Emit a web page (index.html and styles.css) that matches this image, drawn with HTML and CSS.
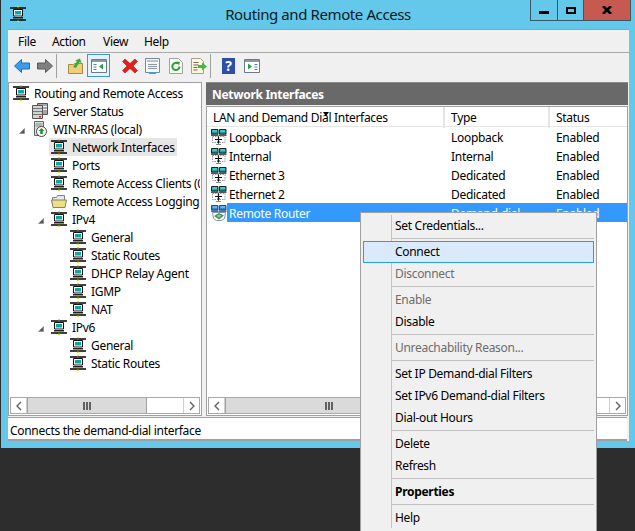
FILE: index.html
```html
<!DOCTYPE html>
<html lang="en">
<head>
    <meta charset="UTF-8">
    <title>Routing and Remote Access</title>
    <link rel="stylesheet" href="styles.css">
</head>
<body>
    <!-- shared icons -->
    <svg class="defs" aria-hidden="true">
        <symbol id="node" viewBox="0 0 16 16">
            <path d="M0 1.200h16v1.600H0zM0 13.200h16v1.600H0z" fill="#000"/>
            <path d="M7 0h2v1.200H7zM7 14.800h2V16H7zM7.500 2.800h1v.7h-1zM7.500 12.500h1v.7h-1z" fill="#e8e010"/>
            <path d="M3.500 3.500h9v6.500h-9z" fill="#fff" stroke="#111"/>
            <path d="M5 5h6v3.500H5z" fill="#0fa6a0"/>
            <path d="M3 11h10v1.500H3z" fill="#222"/>
            <path d="M5 10h6v1H5z" fill="#999"/>
        </symbol>
        <symbol id="lan" viewBox="0 0 16 16">
            <path d="M.5.5h6.500v4.500h-6.500zM8.500.5h6.500v4.500h-6.500z" fill="#0fa8b0" stroke="#111" stroke-width=".9"/>
            <path d="M1.500 1.500h4.500v1h-4.500zM9.500 1.500h4.500v1h-4.500z" fill="#7fe0e0"/>
            <path d="M0 5.600h7.500v1.200h-7.500zM8 5.600h7.500v1.200H8z" fill="#222"/>
            <path d="M1.500 7.500h12.500v6h-12.500z" fill="#fff" stroke="#888" stroke-width=".9" stroke-dasharray="1.500 1"/>
            <path d="M7.500 7.500v7M4 10.500h7" stroke="#111" stroke-width="1.200"/>
            <path d="M6 12.500h3l-1.500 2z" fill="#111"/>
            <path d="M5 15h5v1H5z" fill="#888"/>
        </symbol>
        <symbol id="demand" viewBox="0 0 16 16">
            <path d="M.5.5h6.500v4.500h-6.500zM8.500.5h6.500v4.500h-6.500z" fill="#2a8ed8" stroke="#1d3f6e" stroke-width=".9"/>
            <path d="M1.500 1.500h4.500v1h-4.500zM9.500 1.500h4.500v1h-4.500z" fill="#a8d8f8"/>
            <path d="M0 5.600h7.500v1.200h-7.500zM8 5.600h7.500v1.200H8z" fill="#1d3f6e"/>
            <path d="M1.500 7.500h13l-1 6-3 2h-5l-3-2z" fill="#fff" stroke="#5f8fc0" stroke-width=".9"/>
            <path d="M3 11l5-3 5 2.500-5 4z" fill="#4b8f4a"/>
            <path d="M5.500 11l2.500-1.500 2.500 1-2.500 2z" fill="#9ac899"/>
        </symbol>
        <symbol id="left" viewBox="0 0 8 10"><path d="M6 1L2 5l4 4" fill="none" stroke="#606060" stroke-width="1.400"/></symbol>
        <symbol id="right" viewBox="0 0 8 10"><path d="M2 1l4 4-4 4" fill="none" stroke="#606060" stroke-width="1.400"/></symbol>
        <symbol id="grip" viewBox="0 0 8 8"><path d="M0 0h2v8H0zM3 0h2v8H3zM6 0h2v8H6z" fill="#606060"/></symbol>
        <symbol id="exp" viewBox="0 0 6 6"><path d="M5.500.5v5h-5z" fill="#595959" stroke="#8a8a8a" stroke-width=".7"/></symbol>
    </svg>

    <div class="window">
        <div class="titlebar">
            <svg class="title-icon"><use href="#node"/></svg>
            <div class="title">Routing and Remote Access</div>
            <div class="win-buttons">
                <div class="win-btn btn-min"><svg width="10" height="3"><path d="M0 0h10v3H0z" fill="#000"/></svg></div>
                <div class="win-btn btn-max"><svg width="10" height="7"><path d="M1 1h8v5H1z" fill="none" stroke="#000" stroke-width="2"/></svg></div>
                <div class="win-btn btn-close"><svg width="10" height="8"><path d="M1 0l8 8M9 0l-8 8" fill="none" stroke="#000" stroke-width="2.600"/></svg></div>
            </div>
        </div>

        <div class="client">
            <div class="menubar">
                <span class="menu-file">File</span>
                <span class="menu-action">Action</span>
                <span class="menu-view">View</span>
                <span>Help</span>
            </div>

            <div class="toolbar">
                <div class="tool">
                    <svg width="16" height="14" viewBox="0 0 16 14"><path d="M7.500.5L.5 7l7 6.500V10h8V4h-8z" fill="#3f9be6" stroke="#1c6fb8"/></svg>
                </div>
                <div class="tool">
                    <svg width="16" height="14" viewBox="0 0 16 14"><path d="M8.500.5L15.500 7l-7 6.500V10h-8V4h8z" fill="#808080" stroke="#5a5a5a"/></svg>
                </div>
                <div class="tool-sep"></div>
                <div class="tool">
                    <svg width="15" height="16" viewBox="0 0 15 16"><path d="M.5 6.500h5l1-1h8v10H.5z" fill="#f0cf7c" stroke="#a98a3e"/><path d="M5 9l4-6-2-.5 5-2 1.500 4.500-2-.8L8 10z" fill="#3eaa3a"/></svg>
                </div>
                <div class="tool tool-on">
                    <svg width="16" height="14" viewBox="0 0 16 14"><path d="M.5.5h15v13H.5z" fill="#fff" stroke="#6b7a88"/><path d="M1 1h14v2H1z" fill="#8a98a8"/><path d="M2.500 5h3v1h-3zM2.500 7.500h3v1h-3zM2.500 10h3v1h-3z" fill="#4a84b8"/><path d="M12 4.500v6l-4-3z" fill="#27a047"/></svg>
                </div>
                <div class="tool-gap"></div>
                <div class="tool">
                    <svg width="16" height="16" viewBox="0 0 16 16"><path d="M3 1l5 4.500L13 1l2.500 2.500L11 8l4.500 4.500L13 15l-5-4.500L3 15 .5 12.500 5 8 .5 3.500z" fill="#e0201e" stroke="#a81616" stroke-width=".6"/></svg>
                </div>
                <div class="tool">
                    <svg width="15" height="16" viewBox="0 0 15 16"><path d="M.5.5h14v14H.5z" fill="#f4f6f8" stroke="#7d8a96"/><path d="M2 2h11v2H2z" fill="#b8c2cc"/><path d="M3 6h9v1H3zM3 8h9v1H3zM3 10h9v1H3z" fill="#8a98a6"/><path d="M4 14h7v2H4z" fill="#3a9ee0"/></svg>
                </div>
                <div class="tool">
                    <svg width="14" height="16" viewBox="0 0 14 16"><path d="M.5.5h9l4 4v11H.5z" fill="#fbfbf4" stroke="#a0a0a0"/><path d="M10.500 8.500a3.600 3.600 0 1 1-1.500-3" fill="none" stroke="#2ba03a" stroke-width="2"/><path d="M7.500 3.500l3.500.5-1 3.500z" fill="#2ba03a"/></svg>
                </div>
                <div class="tool">
                    <svg width="16" height="16" viewBox="0 0 16 16"><path d="M.5.5h9l3 3v12H.5z" fill="#fdf6d8" stroke="#a8a088"/><path d="M2.500 4h5v1h-5zM2.500 6.500h5v1h-5zM2.500 9h4v1h-4zM2.500 11.500h4v1h-4z" fill="#6a6a6a"/><path d="M7 7h4V4.500L16 8.500l-5 4V10H7z" fill="#48b548"/></svg>
                </div>
                <div class="tool-sep tool-sep-narrow"></div>
                <div class="tool">
                    <span class="help-icon">?</span>
                </div>
                <div class="tool">
                    <svg width="16" height="14" viewBox="0 0 16 14"><path d="M.5.5h15v13H.5z" fill="#fff" stroke="#6b7a88"/><path d="M1 1h14v2H1z" fill="#8a98a8"/><path d="M10.500 5h3v1h-3zM10.500 7.500h3v1h-3zM10.500 10h3v1h-3z" fill="#4a84b8"/><path d="M4 4.500v6l4-3z" fill="#27a047"/></svg>
                </div>
            </div>

            <div class="panes">
                <div class="pane tree-pane">
                    <div class="tree">
                        <div class="tree-row"><span class="node"><svg class="icon"><use href="#node"/></svg>Routing and Remote Access</span></div>
                        <div class="tree-row"><span class="exp"></span><span class="node">
                            <svg class="icon" viewBox="0 0 16 16"><path d="M5.500.5h10v11h-10z" fill="#a8a8a8" stroke="#555"/><path d="M6 3.500h9M6 6.500h9" stroke="#e8e8e8"/><path d="M.5 2.500h10v13H.5z" fill="#d4d4d4" stroke="#555"/><path d="M1 5.500h9M1 8.500h9M1 11.500h9" stroke="#777"/><path d="M7 13h2v1.500H7z" fill="#d02020"/></svg>Server Status</span></div>
                        <div class="tree-row"><span class="exp"><svg class="exp-mark"><use href="#exp"/></svg></span><span class="node">
                            <svg class="icon" viewBox="0 0 16 16"><path d="M2.500.5h9v14h-9z" fill="#dcdcdc" stroke="#666"/><path d="M3.500 3h7M3.500 5h7" stroke="#888"/><circle cx="9.500" cy="10.500" r="5" fill="#fff" stroke="#444"/><path d="M9.500 7l3 3h-1.700v3H8.200v-3H6.500z" fill="#1a9a30"/></svg>WIN-RRAS (local)</span></div>
                        <div class="tree-row lv1"><span class="exp"></span><span class="node node-sel"><svg class="icon"><use href="#node"/></svg>Network Interfaces</span></div>
                        <div class="tree-row lv1"><span class="exp"></span><span class="node"><svg class="icon"><use href="#node"/></svg>Ports</span></div>
                        <div class="tree-row lv1"><span class="exp"></span><span class="node"><svg class="icon"><use href="#node"/></svg>Remote Access Clients (0)</span></div>
                        <div class="tree-row lv1"><span class="exp"></span><span class="node">
                            <svg class="icon" viewBox="0 0 16 16"><path d="M1.500 4.500h4l1-2h7v10h-12z" fill="#e8e8e8" stroke="#808080"/><path d="M.5 7h15L14 14.500H2z" fill="#eedf80" stroke="#808080"/></svg>Remote Access Logging &amp; Policies</span></div>
                        <div class="tree-row lv1"><span class="exp"><svg class="exp-mark"><use href="#exp"/></svg></span><span class="node"><svg class="icon"><use href="#node"/></svg>IPv4</span></div>
                        <div class="tree-row lv2"><span class="exp"></span><span class="node"><svg class="icon"><use href="#node"/></svg>General</span></div>
                        <div class="tree-row lv2"><span class="exp"></span><span class="node"><svg class="icon"><use href="#node"/></svg>Static Routes</span></div>
                        <div class="tree-row lv2"><span class="exp"></span><span class="node"><svg class="icon"><use href="#node"/></svg>DHCP Relay Agent</span></div>
                        <div class="tree-row lv2"><span class="exp"></span><span class="node"><svg class="icon"><use href="#node"/></svg>IGMP</span></div>
                        <div class="tree-row lv2"><span class="exp"></span><span class="node"><svg class="icon"><use href="#node"/></svg>NAT</span></div>
                        <div class="tree-row lv1"><span class="exp"><svg class="exp-mark"><use href="#exp"/></svg></span><span class="node"><svg class="icon"><use href="#node"/></svg>IPv6</span></div>
                        <div class="tree-row lv2"><span class="exp"></span><span class="node"><svg class="icon"><use href="#node"/></svg>General</span></div>
                        <div class="tree-row lv2"><span class="exp"></span><span class="node"><svg class="icon"><use href="#node"/></svg>Static Routes</span></div>
                    </div>
                    <div class="hscroll">
                        <div class="sb-btn"><svg class="sb-arrow"><use href="#left"/></svg></div>
                        <div class="sb-thumb thumb-tree"><svg class="sb-grip"><use href="#grip"/></svg></div>
                        <div class="sb-track"></div>
                        <div class="sb-btn sb-btn-end"><svg class="sb-arrow"><use href="#right"/></svg></div>
                    </div>
                </div>

                <div class="result-pane">
                    <div class="pane-head">Network Interfaces</div>
                    <div class="pane list-pane">
                        <div class="list-head">
                            <div class="col-head">LAN and Demand Dial Interfaces<span class="sort-mark"></span></div>
                            <div class="col-head">Type</div>
                            <div class="col-head col-last">Status</div>
                        </div>
                        <div class="list">
                            <div class="list-row">
                                <svg class="icon row-icon"><use href="#lan"/></svg>
                                <div class="row-cols"><span>Loopback</span><span>Loopback</span><span>Enabled</span></div>
                            </div>
                            <div class="list-row">
                                <svg class="icon row-icon"><use href="#lan"/></svg>
                                <div class="row-cols"><span>Internal</span><span>Internal</span><span>Enabled</span></div>
                            </div>
                            <div class="list-row">
                                <svg class="icon row-icon"><use href="#lan"/></svg>
                                <div class="row-cols"><span>Ethernet 3</span><span>Dedicated</span><span>Enabled</span></div>
                            </div>
                            <div class="list-row">
                                <svg class="icon row-icon"><use href="#lan"/></svg>
                                <div class="row-cols"><span>Ethernet 2</span><span>Dedicated</span><span>Enabled</span></div>
                            </div>
                            <div class="list-row">
                                <svg class="icon row-icon"><use href="#demand"/></svg>
                                <div class="row-cols row-selected"><span>Remote Router</span><span>Demand-dial</span><span>Enabled</span></div>
                            </div>
                        </div>
                        <div class="hscroll">
                            <div class="sb-btn"><svg class="sb-arrow"><use href="#left"/></svg></div>
                            <div class="sb-thumb thumb-list"><svg class="sb-grip"><use href="#grip"/></svg></div>
                            <div class="sb-track"></div>
                            <div class="sb-btn sb-btn-end"><svg class="sb-arrow"><use href="#right"/></svg></div>
                        </div>
                    </div>
                </div>
            </div>

            <div class="statusbar">Connects the demand-dial interface</div>
        </div>
    </div>

    <!-- context menu -->
    <div class="context-menu">
        <div class="item">Set Credentials...</div>
        <div class="sep"></div>
        <div class="item item-active">Connect</div>
        <div class="item item-off">Disconnect</div>
        <div class="sep"></div>
        <div class="item item-off">Enable</div>
        <div class="item">Disable</div>
        <div class="sep"></div>
        <div class="item item-off">Unreachability Reason...</div>
        <div class="sep"></div>
        <div class="item">Set IP Demand-dial Filters</div>
        <div class="item">Set IPv6 Demand-dial Filters</div>
        <div class="item">Dial-out Hours</div>
        <div class="sep"></div>
        <div class="item">Delete</div>
        <div class="item">Refresh</div>
        <div class="sep"></div>
        <div class="item item-bold">Properties</div>
        <div class="sep"></div>
        <div class="item">Help</div>
    </div>
</body>
</html>
```

FILE: styles.css
```css
* {
    box-sizing: border-box;
}
html, body {
    height: 100%;
}
body {
    margin: 0;
    background-color: #2d2d2d;
    color: #000;
    font-family: "Noto Sans", "Open Sans", sans-serif;
    font-size: 12px;
    letter-spacing: -0.3px;
    overflow: hidden;
    position: relative;
}
.defs {
    position: absolute;
    width: 0;
    height: 0;
}
svg {
    display: block;
    flex-shrink: 0;
}
.icon {
    width: 16px;
    height: 16px;
}

/* window frame */
.window {
    height: 448px;
    background-color: #63c8ea;
    border-left: 1px solid #2d2d2d;
    display: flex;
    flex-direction: column;
}
.titlebar {
    height: 29px;
    display: grid;
    grid-template-columns: 1fr auto 1fr;
    align-items: start;
}
.title-icon {
    width: 16px;
    height: 16px;
    margin: 6px 0 0 9px;
}
.title {
    font-size: 15px;
    letter-spacing: -0.4px;
    line-height: 29px;
    color: #0a1a24;
}
.win-buttons {
    justify-self: end;
    display: flex;
    height: 21px;
    margin-right: 4px;
    border: 1px solid #3a5766;
    border-top: none;
}
.win-btn {
    display: flex;
    align-items: center;
    justify-content: center;
}
.btn-min {
    width: 27px;
    border-right: 1px solid #3a5766;
    padding-top: 5px;
}
.btn-max {
    width: 26px;
    border-right: 1px solid #3a5766;
}
.btn-close {
    width: 46px;
    background-color: #c75a50;
}
.client {
    flex: 1;
    margin: 0 6px 7px 7px;
    background-color: #f0f0f0;
    border-top: 1px solid #a0a0a0;
    display: flex;
    flex-direction: column;
    min-height: 0;
}

/* menu and toolbar */
.menubar {
    height: 23px;
    border-bottom: 1px solid #a9a9a9;
    display: flex;
    align-items: center;
    padding-left: 10px;
}
.menu-file {
    width: 34px;
}
.menu-action {
    width: 51px;
}
.menu-view {
    width: 41px;
}
.toolbar {
    height: 29px;
    display: flex;
    padding: 1px 0 0 2px;
}
.tool {
    width: 23px;
    height: 23px;
    display: flex;
    align-items: center;
    justify-content: center;
}
.tool-on {
    background-color: #e5f1fb;
    border: 1px solid #3a96dd;
}
.tool-gap {
    width: 8px;
}
.tool-sep {
    width: 8px;
    height: 24px;
    border-left: 1px solid #a0a0a0;
}
.tool-sep-narrow {
    width: 7px;
}
.help-icon {
    width: 13px;
    height: 16px;
    background-color: #2d4fa8;
    color: #fff;
    font-weight: bold;
    font-size: 14px;
    line-height: 16px;
    text-align: center;
}

/* panes */
.panes {
    flex: 1;
    display: flex;
    gap: 4px;
    padding-right: 1px;
    min-height: 0;
}
.pane {
    background-color: #fff;
    border: 1px solid #a0a0a0;
    display: flex;
    flex-direction: column;
    min-height: 0;
}
.tree-pane {
    width: 194px;
}
.tree {
    flex: 1;
    overflow: hidden;
    padding: 1px 0 0 4px;
    margin-right: 1px;
}
.tree-row {
    height: 18px;
    display: flex;
    align-items: center;
    white-space: nowrap;
}
.lv1 {
    padding-left: 19px;
}
.lv2 {
    padding-left: 38px;
}
.exp {
    width: 19px;
    flex-shrink: 0;
}
.exp-mark {
    width: 6px;
    height: 6px;
    margin: 3px 0 0 6px;
}
.node {
    display: flex;
    align-items: flex-start;
    height: 18px;
    gap: 5px;
    line-height: 20px;
}
.node .icon {
    margin-top: 1px;
}
.node-sel {
    background-color: #e6e6e6;
    margin-left: -2px;
    padding: 0 2px;
}
.result-pane {
    flex: 1;
    min-width: 0;
    display: flex;
    flex-direction: column;
}
.pane-head {
    height: 23px;
    margin-bottom: 1px;
    padding: 2px 0 0 6px;
    background-color: #696969;
    border-top: 1px solid #8a8a8a;
    color: #fff;
    font-weight: bold;
    line-height: 20px;
}
.list-pane {
    flex: 1;
}
.list-head {
    height: 20px;
    display: grid;
    grid-template-columns: 238px 105px 1fr;
    border-bottom: 1px solid #e5e5e5;
}
.col-head {
    padding-left: 6px;
    line-height: 21px;
    border-right: 2px solid #e5e5e5;
    position: relative;
    white-space: nowrap;
}
.col-last {
    border-right: none;
}
.sort-mark {
    position: absolute;
    left: 116px;
    top: 5px;
    border-left: 3px solid transparent;
    border-right: 3px solid transparent;
    border-top: 4px solid #000;
}
.list {
    flex: 1;
}
.list-row {
    height: 19px;
    display: flex;
    align-items: center;
}
.row-icon {
    margin-left: 4px;
}
.row-cols {
    flex: 1;
    height: 19px;
    display: grid;
    grid-template-columns: 218px 105px 1fr;
    line-height: 21px;
}
.row-cols span {
    padding-left: 6px;
    white-space: nowrap;
}
.row-cols span:first-child {
    padding-left: 2px;
}
.row-selected {
    background-color: #3399ff;
    color: #fff;
}

/* scrollbars */
.hscroll {
    height: 17px;
    margin: 0 1px 1px;
    border: 1px solid #a8a8a8;
    display: flex;
    background-color: #fff;
    flex-shrink: 0;
}
.sb-btn {
    width: 16px;
    display: flex;
    align-items: center;
    justify-content: center;
    border-right: 1px solid #cfcfcf;
}
.sb-btn-end {
    border-right: none;
    border-left: 1px solid #cfcfcf;
}
.sb-arrow {
    width: 8px;
    height: 10px;
}
.sb-thumb {
    background-color: #dadada;
    border-left: 1px solid #a0a0a0;
    border-right: 1px solid #a0a0a0;
    display: flex;
    align-items: center;
    justify-content: center;
}
.sb-grip {
    width: 8px;
    height: 8px;
}
.thumb-tree {
    width: 120px;
}
.thumb-list {
    width: 208px;
}
.sb-track {
    flex: 1;
}
.statusbar {
    height: 24px;
    margin: 1px 2px 0 0;
    padding: 4px 0 0 2px;
    background-color: #fff;
    border-top: 1px solid #a0a0a0;
    border-bottom: 2px solid #a0a0a0;
    line-height: 18px;
    white-space: nowrap;
    flex-shrink: 0;
}

/* context menu */
.context-menu {
    position: absolute;
    left: 360px;
    top: 212px;
    width: 237px;
    padding: 2px;
    background-color: #f0f0f0;
    border: 1px solid #a0a0a0;
}
.context-menu::before {
    content: "";
    position: absolute;
    left: 30px;
    top: 2px;
    bottom: 3px;
    width: 1px;
    background-color: #c4c4c4;
}
.item {
    height: 22px;
    line-height: 22px;
    padding-left: 32px;
    white-space: nowrap;
}
.item-active {
    position: relative;
    line-height: 20px;
    padding-left: 31px;
    background-color: #dbeafb;
    border: 1px solid #26a0da;
}
.item-off {
    color: #6d6d6d;
}
.item-bold {
    font-weight: bold;
}
.sep {
    height: 3px;
    margin: 1px 0 0 28px;
    border-top: 1px solid #c0c0c0;
}
```
